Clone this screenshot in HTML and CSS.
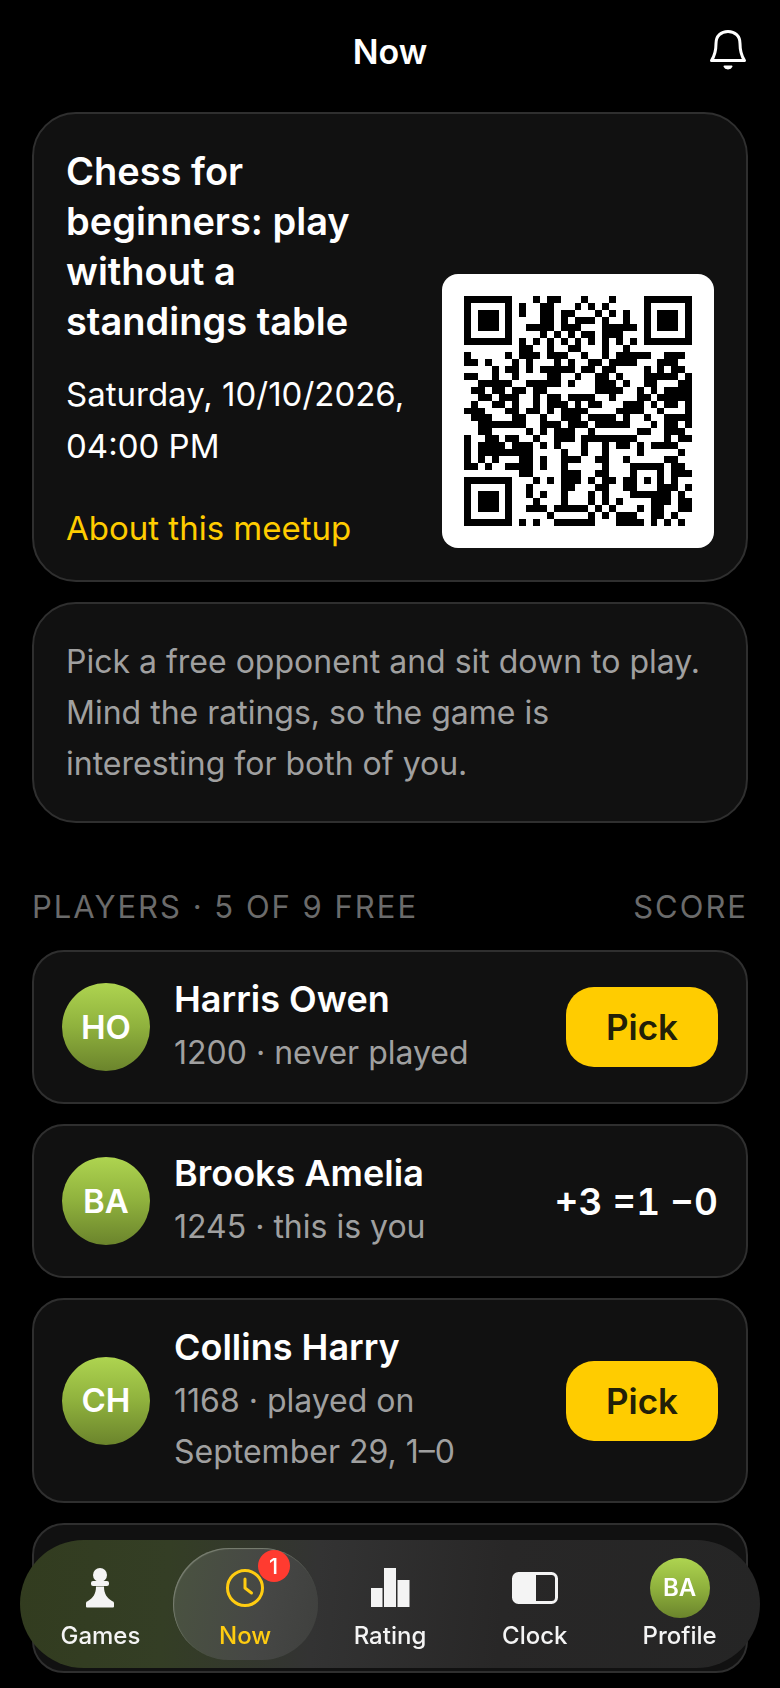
FILE: index.html
```html
<!DOCTYPE html>
<html lang="en">
<head>
    <meta charset="UTF-8">
    <meta name="viewport" content="width=device-width, initial-scale=1.0">
    <title>Now</title>
    <link rel="stylesheet" href="styles.css">
</head>
<body>
    <header class="topbar">
        <h1>Now</h1>
        <button class="bell" type="button" aria-label="Notifications">
            <svg viewBox="0 0 40 44" width="40" height="44" fill="none" stroke="#fff" stroke-width="3" stroke-linejoin="round" stroke-linecap="round">
                <path d="M3.500 32.500C6.500 28 8 24 8 15.500C8 8 13 3.500 20 3.500S32 8 32 15.500C32 24 33.500 28 36.500 32.500Z"/>
                <path d="M16.500 38.500C17.500 41 22.500 41 23.500 38.500Z" fill="#fff" stroke-width="2"/>
            </svg>
        </button>
    </header>

    <main class="content">
        <section class="card meetup">
            <div class="meetup-info">
                <h2>Chess for beginners: play without a standings table</h2>
                <p>Saturday, 10/10/2026, 04:00 PM</p>
                <a href="#about">About this meetup</a>
            </div>
            <div class="qr">
                <svg viewBox="0 0 33 33" preserveAspectRatio="none" role="img" aria-label="Meetup QR code" shape-rendering="crispEdges">
                    <!-- finder squares -->
                    <path fill-rule="evenodd" d="M0 0h7v7h-7zM1 1v5h5v-5zM2 2h3v3h-3zM26 0h7v7h-7zM27 1v5h5v-5zM28 2h3v3h-3zM0 26h7v7h-7zM1 27v5h5v-5zM2 28h3v3h-3z"/>
                    <!-- data, one line per row -->
                    <path transform="translate(0 .5)" stroke="#000" d="
                        M10 0h1M12 0h2M17 0h1M21 0h1
                        M8 1h1M11 1h2M16 1h1M18 1h1M20 1h1
                        M8 2h1M11 2h2M14 2h2M19 2h1M21 2h1M23 2h1
                        M11 3h2M14 3h1M16 3h3M20 3h1M23 3h1
                        M9 4h4M14 4h3M20 4h5
                        M11 5h1M13 5h1M15 5h1M17 5h2M20 5h3
                        M8 6h1M10 6h1M12 6h1M14 6h1M16 6h1M18 6h1M20 6h1M22 6h1M24 6h1
                        M8 7h2M12 7h1M15 7h2M20 7h1M23 7h1
                        M0 8h1M6 8h1M8 8h3M12 8h3M17 8h1M20 8h1M22 8h5M29 8h3
                        M0 9h2M3 9h1M7 9h1M9 9h1M13 9h1M15 9h1M18 9h2M21 9h4M28 9h3
                        M4 10h1M6 10h2M9 10h1M11 10h5M17 10h2M20 10h2M26 10h1M28 10h1M30 10h2
                        M0 11h2M4 11h1M7 11h1M12 11h2M16 11h1M19 11h2M22 11h1M26 11h5M32 11h1
                        M2 12h5M9 12h5M15 12h1M19 12h3M23 12h1M26 12h2M31 12h2
                        M1 13h2M4 13h2M7 13h2M10 13h2M19 13h4M25 13h1M27 13h1M29 13h4
                        M2 14h2M5 14h3M10 14h1M12 14h2M15 14h4M21 14h1M25 14h2M28 14h5
                        M1 15h1M4 15h2M7 15h1M10 15h1M12 15h3M16 15h1M18 15h2M23 15h3M27 15h1M29 15h2M32 15h1
                        M0 16h3M6 16h2M9 16h2M12 16h1M14 16h4M22 16h4M28 16h1M32 16h1
                        M1 17h3M7 17h2M11 17h1M14 17h3M18 17h4M23 17h1M26 17h1M29 17h4
                        M2 18h7M11 18h3M15 18h3M19 18h5M27 18h1M29 18h2M32 18h1
                        M2 19h2M9 19h1M11 19h1M13 19h3M18 19h1M25 19h2M29 19h3
                        M0 20h1M3 20h2M6 20h2M10 20h1M13 20h3M17 20h8M29 20h1M31 20h2
                        M0 21h1M2 21h4M7 21h3M11 21h1M13 21h1M17 21h1M20 21h1M22 21h2M25 21h1M27 21h4
                        M0 22h1M2 22h8M14 22h1M17 22h1M20 22h1M25 22h1M31 22h1
                        M0 23h1M2 23h1M4 23h1M8 23h2M11 23h1M14 23h3M19 23h2M23 23h1M29 23h2
                        M0 24h2M3 24h1M6 24h4M11 24h1M14 24h1M20 24h1M24 24h5M30 24h2
                        M8 25h2M14 25h3M19 25h2M24 25h1M28 25h1M30 25h3
                        M10 26h1M12 26h1M14 26h3M18 26h1M20 26h2M23 26h2M26 26h1M28 26h1M30 26h1
                        M9 27h1M14 27h2M19 27h2M23 27h2M28 27h3M32 27h1
                        M9 28h1M11 28h1M14 28h1M18 28h1M20 28h1M24 28h6M31 28h1
                        M10 29h1M14 29h1M18 29h1M20 29h1M22 29h1M27 29h3M31 29h2
                        M9 30h3M13 30h5M19 30h1M21 30h1M25 30h1M27 30h2M31 30h2
                        M12 31h1M18 31h1M20 31h1M22 31h3M27 31h2M30 31h1
                        M8 32h1M10 32h1M13 32h6M22 32h4M27 32h1M29 32h1M31 32h1"/>
                </svg>
            </div>
        </section>

        <p class="card hint">Pick a free opponent and sit down to play. Mind the ratings, so the game is interesting for both of you.</p>

        <div class="list-head">
            <h3>Players · 5 of 9 free</h3>
            <span>Score</span>
        </div>

        <ul class="players">
            <li class="player">
                <span class="avatar">HO</span>
                <div class="who">
                    <strong>Harris Owen</strong>
                    <p>1200 · never played</p>
                </div>
                <button class="pick" type="button">Pick</button>
            </li>
            <li class="player">
                <span class="avatar">BA</span>
                <div class="who">
                    <strong>Brooks Amelia</strong>
                    <p>1245 · this is you</p>
                </div>
                <span class="score">+3 =1 −0</span>
            </li>
            <li class="player">
                <span class="avatar">CH</span>
                <div class="who">
                    <strong>Collins Harry</strong>
                    <p>1168 · played on September 29, 1–0</p>
                </div>
                <button class="pick" type="button">Pick</button>
            </li>
            <li class="player"></li>
        </ul>
    </main>

    <nav class="tabbar">
        <a href="#games">
            <svg class="icon" viewBox="0 0 60 60" fill="currentColor">
                <circle cx="30" cy="17" r="7"/>
                <rect x="21" y="23" width="18" height="5" rx="2"/>
                <path d="M26 28.500H34C34 36 37 40 42 43Q44 43.500 44 45V48.500Q44 49.500 43 49.500H17Q16 49.500 16 48.500V45Q16 43.500 18 43C23 40 26 36 26 28.500Z"/>
            </svg>
            Games
        </a>
        <a class="active" href="#now" aria-current="page">
            <svg class="icon" viewBox="0 0 60 60" fill="none" stroke="currentColor" stroke-width="3" stroke-linecap="round" stroke-linejoin="round">
                <circle cx="30" cy="30" r="17.500"/>
                <path d="M30 21V30L36.500 35"/>
            </svg>
            Now
            <span class="badge">1</span>
        </a>
        <a href="#rating">
            <svg class="icon" viewBox="0 0 60 60" fill="currentColor">
                <path d="M11 30H22.500V49H11ZM24 10H36V49H24ZM37.500 22H49.500V49H37.500Z"/>
            </svg>
            Rating
        </a>
        <a href="#clock">
            <svg class="icon" viewBox="0 0 60 60">
                <rect x="8.500" y="15.500" width="43" height="29" rx="5" fill="none" stroke="currentColor" stroke-width="3"/>
                <path d="M31 15V45H13Q8 45 8 40V20Q8 15 13 15Z" fill="currentColor"/>
            </svg>
            Clock
        </a>
        <a href="#profile">
            <span class="avatar small">BA</span>
            Profile
        </a>
    </nav>
</body>
</html>
```

FILE: styles.css
```css
* {
    box-sizing: border-box;
}

body {
    margin: 0;
    background: #000;
    color: #fff;
    font-family: Inter, "Liberation Sans", sans-serif;
    font-size: 32px;
    line-height: 51px;
}

h1, h2, h3, p, ul {
    margin: 0;
    padding: 0;
    font-size: inherit;
}

a {
    text-decoration: none;
}

button {
    border: none;
    font-family: inherit;
    cursor: pointer;
}

.topbar {
    display: grid;
    grid-template-columns: 1fr auto 1fr;
    align-items: center;
    height: 112px;
    padding: 0 32px 12px;
}

.topbar h1 {
    grid-column: 2;
    padding-top: 2px;
    font-size: 34px;
    font-weight: 600;
}

.bell {
    justify-self: end;
    display: flex;
    padding: 0;
    background: none;
}

.content {
    padding: 0 32px;
}

.card,
.player {
    background: #111;
    border: 2px solid #2f2f2f;
}

.card {
    border-radius: 44px;
    padding: 32px;
    margin-bottom: 20px;
}

.meetup {
    display: flex;
    align-items: flex-end;
    gap: 32px;
}

.meetup-info {
    flex: 1;
    font-size: 33px;
    line-height: 52px;
}

.meetup-info h2 {
    font-size: 38px;
    font-weight: 600;
    line-height: 50px;
    margin-bottom: 22px;
}

.meetup-info a {
    display: block;
    margin-top: 36px;
    color: #fc0;
    line-height: 40px;
}

.qr {
    flex: none;
    width: 272px;
    padding: 22px;
    border-radius: 16px;
    background: #fff;
}

.qr svg {
    display: block;
    width: 100%;
    height: 230px;
}

.hint {
    color: #a0a0a0;
}

.list-head {
    display: flex;
    justify-content: space-between;
    padding-top: 38px;
    margin-bottom: 18px;
    color: #6b6b6b;
    font-size: 31px;
    letter-spacing: 2px;
    text-transform: uppercase;
}

.list-head h3 {
    font-weight: 400;
}

.players {
    display: flex;
    flex-direction: column;
    gap: 20px;
    list-style: none;
}

.player {
    display: flex;
    align-items: center;
    gap: 24px;
    min-height: 150px;
    padding: 24px 28px;
    border-radius: 32px;
}

.avatar {
    flex: none;
    display: flex;
    align-items: center;
    justify-content: center;
    width: 88px;
    height: 88px;
    border-radius: 50%;
    background: linear-gradient(#aed450, #8fb13d 50%, #6b842c);
    color: #fff;
    font-size: 33px;
    font-weight: 600;
}

.who {
    flex: 1;
}

.who strong {
    display: block;
    margin-bottom: 5px;
    font-size: 36px;
    font-weight: 600;
    line-height: 46px;
}

.who p {
    color: #a0a0a0;
}

.pick {
    width: 152px;
    height: 80px;
    border-radius: 28px;
    background: #fc0;
    color: #222008;
    font-size: 35px;
    font-weight: 600;
}

.score {
    font-size: 37px;
    font-weight: 600;
    font-variant-numeric: tabular-nums;
}

.tabbar {
    position: fixed;
    left: 20px;
    right: 20px;
    bottom: 20px;
    display: flex;
    padding: 8px;
    border-radius: 64px;
    background: linear-gradient(95deg, #323c1f, #343e25 20%, #333 40%, #282727 65%, #252525);
}

.tabbar a {
    position: relative;
    flex: 1;
    display: flex;
    flex-direction: column;
    align-items: center;
    height: 112px;
    padding-top: 10px;
    border-radius: 56px;
    color: #f4f4f4;
    font-size: 24px;
    font-weight: 500;
    line-height: 36px;
}

.tabbar .active {
    color: #fc1;
    background: linear-gradient(100deg, #4a5340, #464745 60%, #3f403e);
    box-shadow: inset 1px 1px 1px #7b8173;
}

.icon {
    width: 60px;
    height: 60px;
}

.avatar.small {
    width: 60px;
    height: 60px;
    font-size: 24px;
}

.badge {
    position: absolute;
    top: 2px;
    right: 28px;
    width: 32px;
    height: 32px;
    border-radius: 50%;
    background: #ff3b30;
    color: #fff;
    font-size: 22px;
    line-height: 32px;
    text-align: center;
}
```
